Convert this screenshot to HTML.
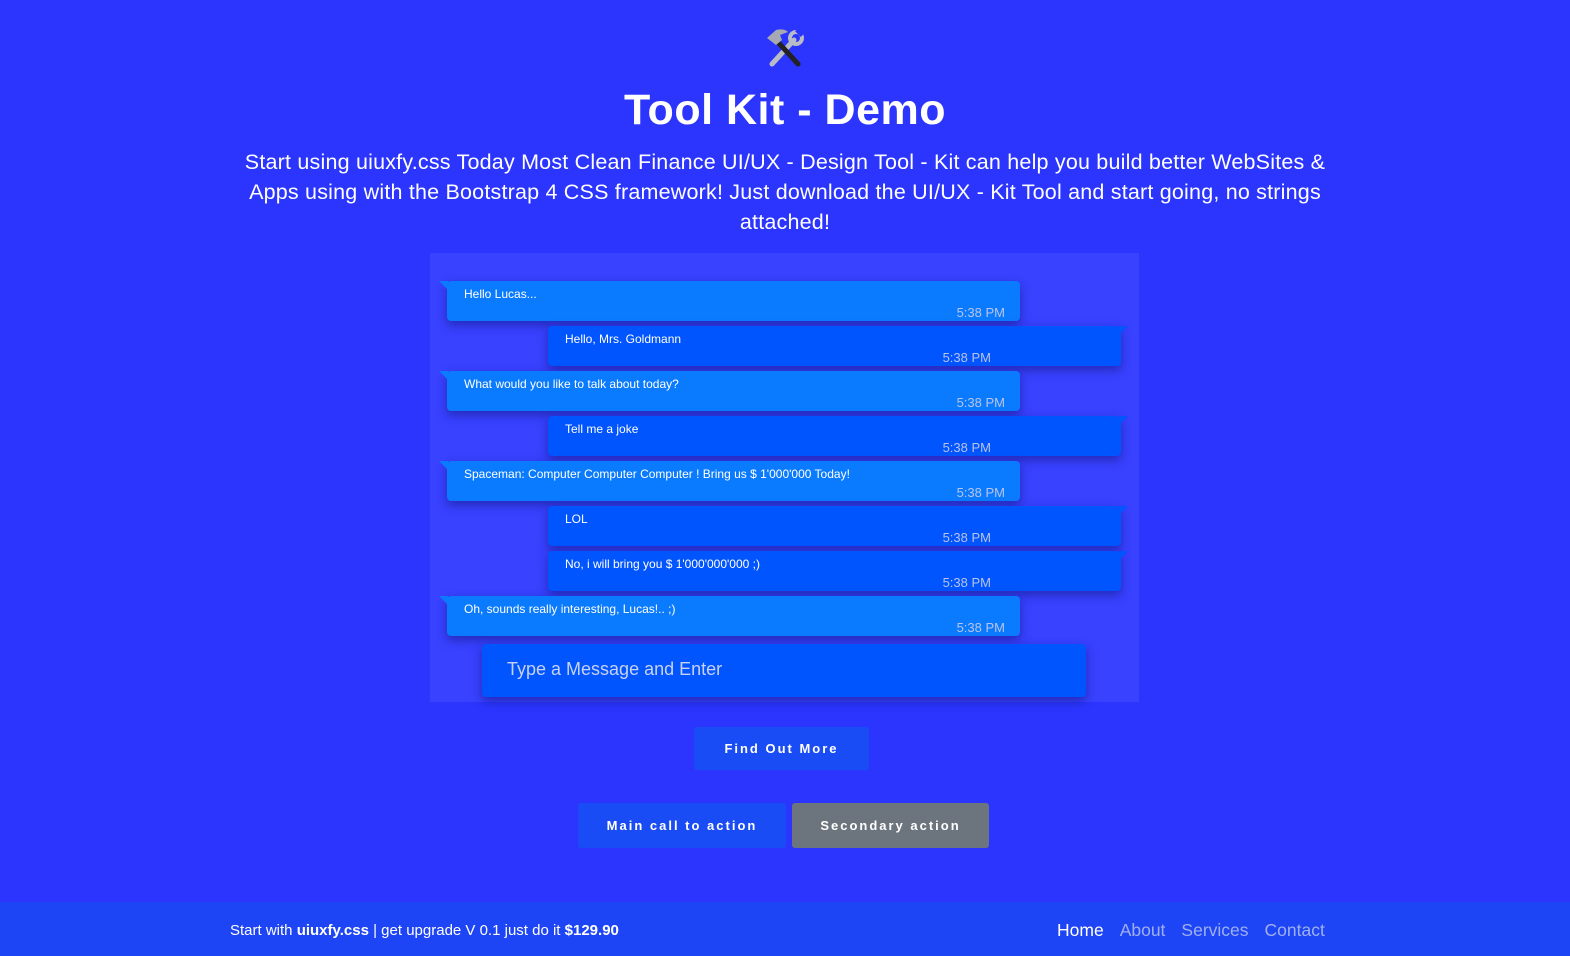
<!DOCTYPE html>
<html><head><meta charset="utf-8"><style>
*{margin:0;padding:0;box-sizing:border-box}
body{width:1570px;height:956px;background:#2b35fe;font-family:"Liberation Sans",sans-serif;color:#fff;position:relative;overflow:hidden}
.a{position:absolute}
h1{position:absolute;top:86px;left:0;width:1570px;text-align:center;font-size:43px;font-weight:bold;letter-spacing:0.5px}
.sub{position:absolute;top:147px;left:0;width:1570px;text-align:center;font-size:21.5px;line-height:30px;letter-spacing:0.2px}
.panel{left:430px;top:253px;width:709px;height:449px;background:#3842ff}
.b{position:absolute;height:40px;width:573px;border-radius:4px;box-shadow:0 4px 10px rgba(20,20,120,.55);font-size:12px}
.b .t{position:absolute;left:17px;top:6px}
.b .m{position:absolute;right:15px;top:24px;font-size:13px;color:#b8c4e8}
.L{left:447px;background:#0a7bff}
.R{left:548px;background:#0055ff}
.L:before{content:"";position:absolute;left:-8px;top:0;border-top:9px solid #0a7bff;border-left:9px solid transparent}
.R:after{content:"";position:absolute;right:-7px;top:0;border-top:8px solid #0055ff;border-right:8px solid transparent}
.btn{position:absolute;text-align:center;font-size:13px;letter-spacing:2px;font-weight:bold;border-radius:3px}
</style></head><body>
<svg class="a" style="left:762px;top:26px" width="44" height="44" viewBox="0 0 44 44">
 <line x1="10" y1="38" x2="32" y2="14" stroke="#b9bcc4" stroke-width="5" stroke-linecap="round"/>
 <circle cx="34" cy="12" r="6" fill="none" stroke="#b9bcc4" stroke-width="4"/>
 <rect x="34" y="2" width="8" height="7" fill="#2b35fe" transform="rotate(45 38 6)"/>
 <line x1="14" y1="14" x2="36" y2="38" stroke="#222" stroke-width="5" stroke-linecap="round"/>
 <path d="M5 12 L14 4 Q22 2 26 6 L18 9 L20 14 L14 19 Z" fill="#a6a9b1"/>
</svg>
<h1>Tool Kit - Demo</h1>
<div class="sub">Start using uiuxfy.css Today Most Clean Finance UI/UX - Design Tool - Kit can help you build better WebSites &amp;<br>Apps using with the Bootstrap 4 CSS framework! Just download the UI/UX - Kit Tool and start going, no strings<br>attached!</div>
<div class="a panel"></div>
<div class="b L" style="top:281px"><span class="t">Hello Lucas...</span><span class="m">5:38 PM</span></div>
<div class="b R" style="top:326px"><span class="t">Hello, Mrs. Goldmann</span><span class="m" style="right:130px">5:38 PM</span></div>
<div class="b L" style="top:371px"><span class="t">What would you like to talk about today?</span><span class="m">5:38 PM</span></div>
<div class="b R" style="top:416px"><span class="t">Tell me a joke</span><span class="m" style="right:130px">5:38 PM</span></div>
<div class="b L" style="top:461px"><span class="t">Spaceman: Computer Computer Computer ! Bring us $ 1'000'000 Today!</span><span class="m">5:38 PM</span></div>
<div class="b R" style="top:506px"><span class="t">LOL</span><span class="m" style="right:130px">5:38 PM</span></div>
<div class="b R" style="top:551px"><span class="t">No, i will bring you $ 1'000'000'000 ;)</span><span class="m" style="right:130px">5:38 PM</span></div>
<div class="b L" style="top:596px"><span class="t">Oh, sounds really interesting, Lucas!.. ;)</span><span class="m">5:38 PM</span></div>
<div class="a" style="left:482px;top:644px;width:604px;height:53px;background:#0055ff;border-radius:4px;box-shadow:0 4px 10px rgba(20,20,120,.55);font-size:18px;color:#c8d2f0;padding:15px 25px">Type a Message and Enter</div>
<div class="btn" style="left:694px;top:727px;width:175px;height:43px;line-height:43px;background:#1a4cf5">Find Out More</div>
<div class="btn" style="left:578px;top:803px;width:208px;height:45px;line-height:45px;background:#1a4cf5">Main call to action</div>
<div class="btn" style="left:792px;top:803px;width:197px;height:45px;line-height:45px;background:#6c757d">Secondary action</div>
<div class="a" style="left:0;top:902px;width:1570px;height:54px;background:#1e45f5"></div>
<div class="a" style="left:230px;top:922px;font-size:15px">Start with <b>uiuxfy.css</b> | get upgrade V 0.1 just do it <b>$129.90</b></div>
<div class="a" style="left:1057px;top:920px;font-size:17.5px">Home<span style="color:#9fb0f0;margin-left:16px">About</span><span style="color:#9fb0f0;margin-left:16px">Services</span><span style="color:#9fb0f0;margin-left:16px">Contact</span></div>
</body></html>
